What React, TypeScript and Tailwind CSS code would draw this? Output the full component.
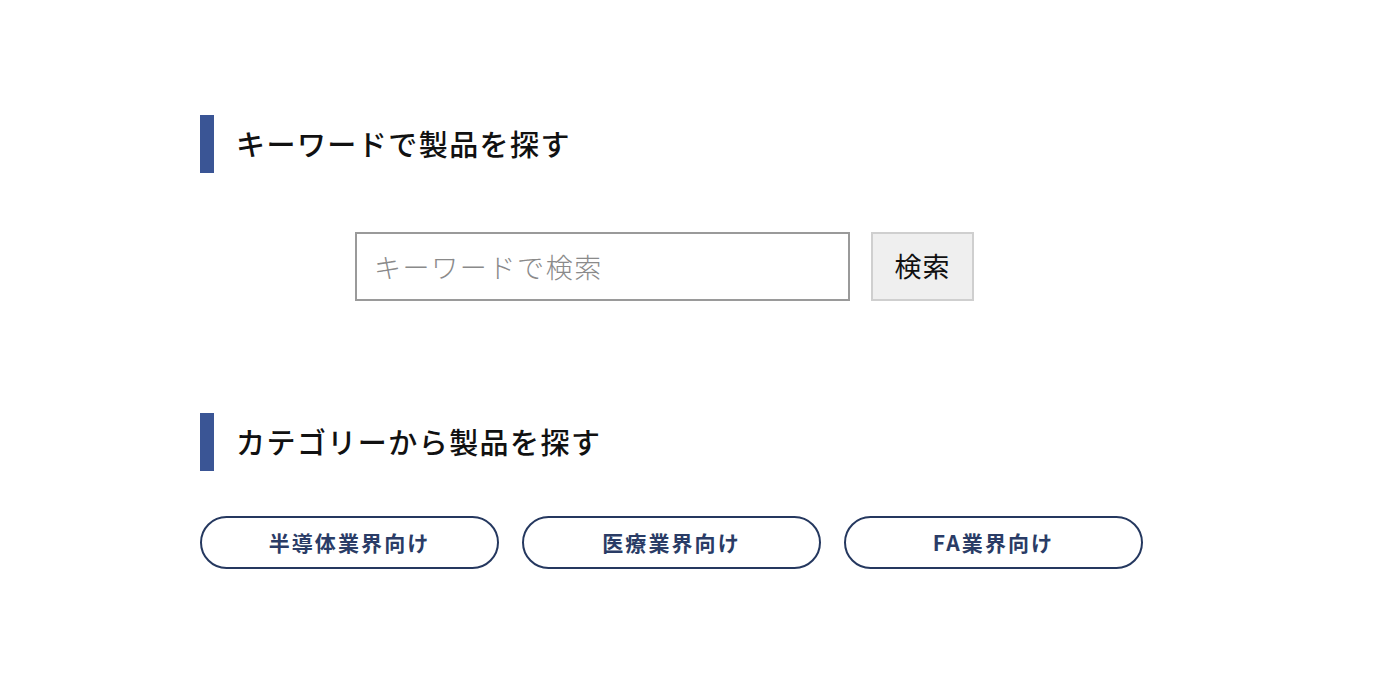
import { useState } from "react";

const font = { fontFamily: '"Noto Sans CJK JP", "Noto Sans", sans-serif' };

function SectionTitle({ children }: { children: React.ReactNode }) {
  return (
    <div className="flex items-center h-[58px]">
      <span className="w-[14px] h-full bg-[#3a5595]" />
      <h2 className="ml-[22px] text-[29px] font-medium tracking-[0.05em] text-[#111]">
        {children}
      </h2>
    </div>
  );
}

const categories = ["半導体業界向け", "医療業界向け", "FA業界向け"];

export default function App() {
  const [keyword, setKeyword] = useState("");

  return (
    <div className="min-h-screen bg-white" style={font}>
      <div className="pl-[200px] pr-[200px] pt-[115px]">
        <SectionTitle>キーワードで製品を探す</SectionTitle>

        <form
          className="mt-[59px] ml-[155px] flex items-center gap-[21px]"
          onSubmit={(e) => e.preventDefault()}
        >
          <input
            value={keyword}
            onChange={(e) => setKeyword(e.target.value)}
            placeholder="キーワードで検索"
            className="w-[495px] h-[69px] border-2 border-[#9a9a9a] px-[17px] text-[27px] font-light tracking-[0.06em] text-[#222] placeholder:text-[#8a8a8a] outline-none"
          />
          <button
            type="submit"
            className="w-[103px] h-[69px] border-2 border-[#cfcfcf] bg-[#efefef] text-[27px] text-[#111] tracking-[0.04em]"
          >
            検索
          </button>
        </form>

        <div className="mt-[112px]">
          <SectionTitle>カテゴリーから製品を探す</SectionTitle>
        </div>

        <div className="mt-[45px] flex gap-[23px]">
          {categories.map((c) => (
            <button
              key={c}
              className="w-[299px] h-[53px] rounded-full border-2 border-[#25385f] text-[21px] font-bold tracking-[0.1em] text-[#2a3c66]"
            >
              {c}
            </button>
          ))}
        </div>
      </div>
    </div>
  );
}
